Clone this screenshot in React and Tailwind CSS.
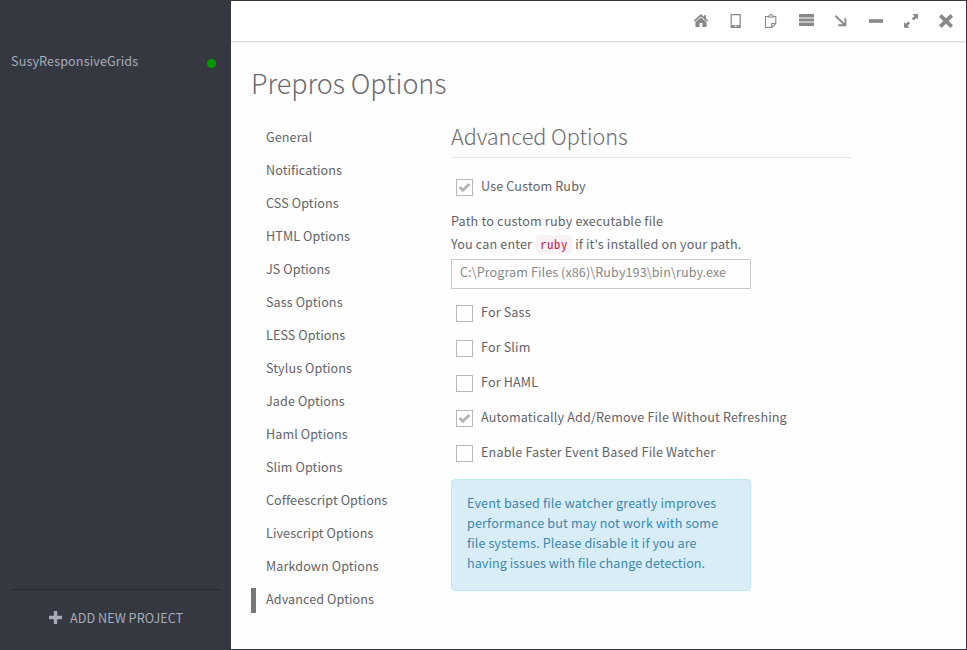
import React from 'react';

const NAV = ['General', 'Notifications', 'CSS Options', 'HTML Options', 'JS Options', 'Sass Options', 'LESS Options', 'Stylus Options', 'Jade Options', 'Haml Options', 'Slim Options', 'Coffeescript Options', 'Livescript Options', 'Markdown Options', 'Advanced Options'];

function Icon({ children, className = '' }) {
  return (
    <svg width="16" height="16" viewBox="0 0 16 16" fill="currentColor" className={className}>
      {children}
    </svg>
  );
}

function Toolbar() {
  return (
    <header className="flex h-[41px] items-start gap-[19px] border-b border-[#dedede] bg-white pl-[462px] pt-3 text-[#888] shadow-[0_1px_0_#f0f0f0]">
      <Icon><path d="M8 1 .8 7.4 2 8.8l6-5.2 6 5.2 1.2-1.4-2.2-2V2.2h-2v1.5z" /><path d="M8 4.5 2.4 9.2V14h4.2v-4h2.8v4h4.2V9.2z" /></Icon>
      <Icon><path fillRule="evenodd" d="M2.6 1h10.2v14H2.6zM3.8 2.2v10h7.8v-10zM7 12.9V14h1.6v-1.1z" /></Icon>
      <Icon><path fill="none" stroke="currentColor" strokeWidth="1.1" d="M5 3.5H2.5v11h6.3l4-4v-7H11M8.8 14.5v-4h4" /><path fillRule="evenodd" d="M5 2.6h1.6V1h2.8v1.6H11v2H5zM6.6 2.6v.8h2.8v-.8z" /></Icon>
      <Icon><path d="M1 1h15v3H1zM1 6h15v2H1zM1 10h15v3H1z" /><path opacity=".5" d="M1 4h15v2H1zM1 8h15v2H1z" /></Icon>
      <Icon><path fill="none" stroke="currentColor" strokeWidth="1.9" d="M2.4 2.8 12.2 12.2M12.4 5.2v7.1H5.2" /></Icon>
      <Icon><path d="M1 6.2h14v3.6H1z" /></Icon>
      <Icon><path d="M9.5 1H15v5.5l-1.7-1.7-2.6 2.6-1.9-1.9 2.6-2.6zM1 9.2l1.8 1.6 2.4-2.4 1.9 1.9-2.4 2.4 1.8 2.1H1z" /></Icon>
      <Icon><path fill="none" stroke="currentColor" strokeWidth="3.8" d="m2.3 2.3 11.4 11.4M13.7 2.3 2.3 13.7" /></Icon>
    </header>
  );
}

function Check({ label, checked }) {
  return (
    <div className="flex h-[35px] items-start pl-[5px]">
      <span className="mt-[9px] flex size-[17px] shrink-0 items-center justify-center border border-[#b8b8b8]">
        {checked && (
          <svg width="13" height="11" viewBox="0 0 13 11" fill="none" stroke="#b5b5b5" strokeWidth="2.8">
            <path d="m1.6 5 3.2 3.2L11.4 2" />
          </svg>
        )}
      </span>
      <span className="ml-2 mt-[6px] leading-5">{label}</span>
    </div>
  );
}

export default function App() {
  return (
    <div className="flex h-[650px] w-[967px] overflow-hidden whitespace-nowrap bg-[#353841] font-['Noto_Sans_CJK_SC',sans-serif] text-[12.6px] tracking-[0.12px] text-[#636367]">
      <aside className="flex w-[231px] flex-col text-[#a5adb8]">
        <div className="mt-[51px] flex justify-between pl-[11px] pr-[15px]">
          <span className="leading-5">SusyResponsiveGrids</span>
          <span className="mt-2 size-[9px] rounded-full bg-[#009a00]" />
        </div>
        <div className="ml-[11px] mr-[10px] mt-auto flex h-[61px] items-start border-t border-[#272a31] pl-[38px] pt-[18px]">
          <svg width="13" height="13" viewBox="0 0 13 13" className="mt-[3px]"><path fill="currentColor" d="M4.8 0h3.4v4.8H13v3.4H8.2V13H4.8V8.2H0V4.8h4.8z" /></svg>
          <span className="ml-2 leading-5 tracking-[0.05px]">ADD NEW PROJECT</span>
        </div>
      </aside>
      <main className="mb-px mr-px mt-px flex flex-1 flex-col bg-[#fefefe]">
        <Toolbar />
        <h1 className="ml-5 mt-[21px] text-[27px] font-light leading-10 tracking-[-0.08px] text-[#6c6c70]">Prepros Options</h1>
        <div className="flex pl-5">
          <nav className="mt-[17px] w-[200px] tracking-[0.09px]">
            {NAV.map((name, i) => (
              <div key={name} className="flex h-[33px] items-start">
                <span className={i === NAV.length - 1 ? 'mt-[6px] h-[25px] w-[5px] bg-[#777]' : 'w-[5px]'} />
                <span className="ml-[10px] mt-[7px] leading-5">{name}</span>
              </div>
            ))}
          </nav>
          <section className="w-[400px] pt-4 tracking-[0.15px]">
            <h2 className="h-[39px] border-b border-[#e5e5e5] text-[21.6px] font-light leading-[34px] tracking-[-0.02px] text-[#6c6c70]">Advanced Options</h2>
            <div className="pt-3">
              <Check label="Use Custom Ruby" checked />
            </div>
            <p className="mt-[6px] leading-5 tracking-[0.2px]">Path to custom ruby executable file</p>
            <p className="mt-[3px] flex leading-5">
              <span>You can enter</span>
              <code className="ml-[4px] mt-px h-[19px] w-9 rounded bg-[#f9f2f4] text-center font-['Noto_Sans_Mono_CJK_SC','DejaVu_Sans_Mono',monospace] text-[12.6px] leading-[18px] tracking-[0.6px] text-[#c7254e]">ruby</code>
              <span className="ml-[3px]">if it's installed on your path.</span>
            </p>
            <div className="mt-[5px] h-[30px] w-[300px] border border-[#c8c8c8] pl-2 pt-[2px] leading-5 tracking-[0.08px] text-[#888]">C:\Program Files (x86)\Ruby193\bin\ruby.exe</div>
            <div className="mt-[7px]">
              <Check label="For Sass" />
              <Check label="For Slim" />
              <Check label="For HAML" />
              <Check label="Automatically Add/Remove File Without Refreshing" checked />
              <Check label="Enable Faster Event Based File Watcher" />
            </div>
            <div className="mt-[8px] h-[112px] w-[300px] rounded border border-[#bce8f1] bg-[#d9edf7] pl-[15px] pt-[13px] leading-5 text-[#3a87ad]">
              Event based file watcher greatly improves<br />
              performance but may not work with some<br />
              <span className="tracking-[0.09px]">file systems. Please disable it if you are</span><br />
              <span className="tracking-[0.06px]">having issues with file change detection.</span>
            </div>
          </section>
        </div>
      </main>
    </div>
  );
}
